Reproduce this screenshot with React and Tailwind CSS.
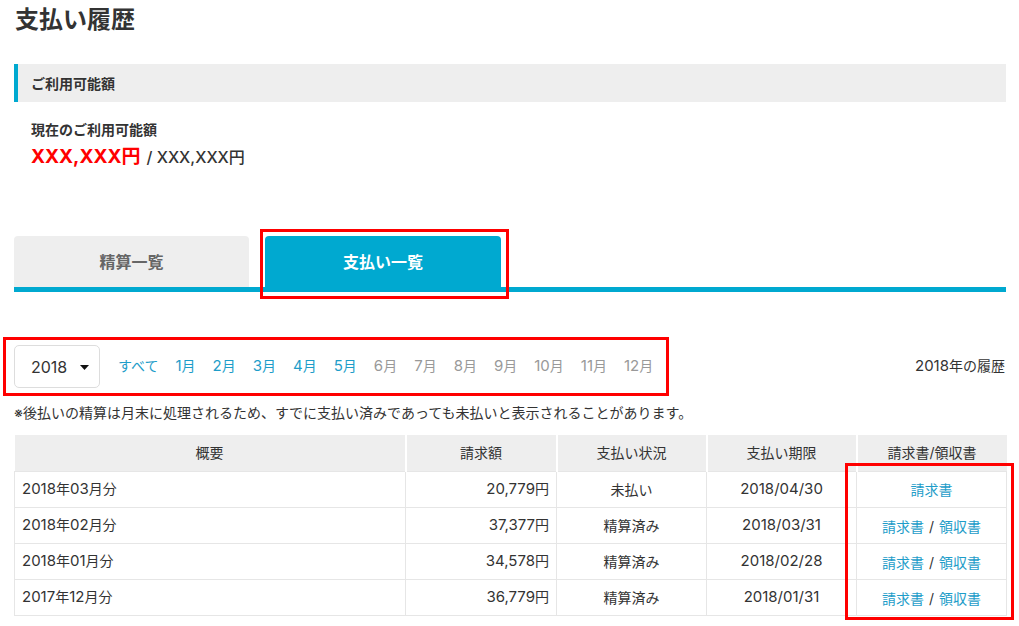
import React from "react";

function N({ t, size = "text-[15px]" }) {
  const parts = t.split(/(\d[\d,\/]*)/);
  return (
    <>
      {parts.map((p, i) =>
        /^\d/.test(p) ? (
          <span key={i} className={size}>
            {p}
          </span>
        ) : (
          <React.Fragment key={i}>{p}</React.Fragment>
        )
      )}
    </>
  );
}

const months = [
  { label: "すべて", active: true },
  { label: "1月", active: true },
  { label: "2月", active: true },
  { label: "3月", active: true },
  { label: "4月", active: true },
  { label: "5月", active: true },
  { label: "6月", active: false },
  { label: "7月", active: false },
  { label: "8月", active: false },
  { label: "9月", active: false },
  { label: "10月", active: false },
  { label: "11月", active: false },
  { label: "12月", active: false },
];

const rows = [
  { name: "2018年03月分", amount: "20,779円", status: "未払い", due: "2018/04/30", receipt: false },
  { name: "2018年02月分", amount: "37,377円", status: "精算済み", due: "2018/03/31", receipt: true },
  { name: "2018年01月分", amount: "34,578円", status: "精算済み", due: "2018/02/28", receipt: true },
  { name: "2017年12月分", amount: "36,779円", status: "精算済み", due: "2018/01/31", receipt: true },
];

export default function App() {
  return (
    <div
      className="w-[1019px] h-[626px] overflow-hidden bg-white text-[#333] pl-[14px] pr-[13px]"
      style={{ fontFamily: 'Inter, "Noto Sans CJK JP", sans-serif' }}
    >
      <h1 className="pt-[5px] text-[24px] leading-[30px] font-bold pl-[1px]">支払い履歴</h1>

      <div className="mt-[29px] h-[38px] bg-[#eeeeee] border-l-4 border-[#00a9d0] pl-[13px] flex items-center text-[14px] font-bold">
        ご利用可能額
      </div>

      <div className="pl-[17px]">
        <div className="pt-[19px] text-[14px] leading-[18px] font-bold">現在のご利用可能額</div>
        <div className="mt-[5px] h-[26px] flex items-baseline leading-[26px]">
          <span className="text-[19px] font-bold text-[#ff0000]">XXX,XXX円</span>
          <span className="ml-[6px] text-[16px] font-medium">/ XXX,XXX円</span>
        </div>
      </div>

      <div className="mt-[66px]">
        <div className="flex gap-[16px] items-end">
          <div className="w-[235px] h-[51px] bg-[#eeeeee] rounded-t-[4px] flex items-center justify-center text-[16px] font-bold text-[#666]">
            精算一覧
          </div>
          <div className="relative w-[236px] h-[51px] bg-[#00a9d0] rounded-t-[4px] flex items-center justify-center text-[16px] font-bold text-white">
            支払い一覧
            <span className="absolute -left-[5px] -top-[7px] w-[249px] h-[70px] border-[3px] border-[#ff0000]" />
          </div>
        </div>
        <div className="h-[5px] bg-[#00a9d0]" />
      </div>

      <div className="relative mt-[53px] flex items-center">
        <span className="absolute -left-[11px] -top-[8px] w-[666px] h-[59px] border-[3px] border-[#ff0000]" />
        <div className="w-[86px] h-[43px] border border-[#dddddd] rounded-[5px] flex items-center pl-[16px] pr-[10px] justify-between text-[16px]">
          <span>2018</span>
          <svg width="9" height="5" viewBox="0 0 9 5" className="mt-[1px]">
            <path d="M0 0 L9 0 L4.5 5 Z" fill="#111" />
          </svg>
        </div>
        <div className="ml-[18px] flex gap-[17px] text-[14px]">
          {months.map((m) => (
            <span key={m.label} className={m.active ? "text-[#1e9dc9]" : "text-[#999999]"}>
              <N t={m.label} />
            </span>
          ))}
        </div>
        <div className="ml-auto text-[14px] pr-[1px]">
          <N t="2018年の履歴" />
        </div>
      </div>

      <p className="mt-[15px] text-[14px] leading-[20px]">
        ※後払いの精算は月末に処理されるため、すでに支払い済みであっても未払いと表示されることがあります。
      </p>

      <div className="relative mt-[12px]">
        <table className="w-[992px] table-fixed border-collapse text-[14px]">
          <colgroup>
            <col className="w-[391px]" />
            <col className="w-[151px]" />
            <col className="w-[150px]" />
            <col className="w-[150px]" />
            <col className="w-[150px]" />
          </colgroup>
          <thead>
            <tr className="h-[36px] bg-[#eeeeee]">
              <th className="font-normal border-r-2 border-white">概要</th>
              <th className="font-normal border-x-2 border-white">請求額</th>
              <th className="font-normal border-x-2 border-white">支払い状況</th>
              <th className="font-normal border-x-2 border-white">支払い期限</th>
              <th className="font-normal border-l-2 border-white">請求書/領収書</th>
            </tr>
          </thead>
          <tbody>
            {rows.map((r) => (
              <tr key={r.name} className="h-[36px]">
                <td className="border border-[#e6e6e6] pl-[7px]">
                  <N t={r.name} />
                </td>
                <td className="border border-[#e6e6e6] pr-[7px] text-right">
                  <N t={r.amount} />
                </td>
                <td className="border border-[#e6e6e6] text-center">{r.status}</td>
                <td className="border border-[#e6e6e6] text-center">
                  <N t={r.due} />
                </td>
                <td className="border border-[#e6e6e6] text-center">
                  {r.receipt ? (
                    <span className="relative top-[1px]">
                      <span className="text-[#1e9dc9]">請求書</span>
                      <span className="mx-[5px]">/</span>
                      <span className="text-[#1e9dc9]">領収書</span>
                    </span>
                  ) : (
                    <span className="text-[#1e9dc9]">請求書</span>
                  )}
                </td>
              </tr>
            ))}
          </tbody>
        </table>
        <span className="absolute left-[831px] top-[28px] w-[169px] h-[157px] border-[3px] border-[#ff0000]" />
      </div>
    </div>
  );
}
